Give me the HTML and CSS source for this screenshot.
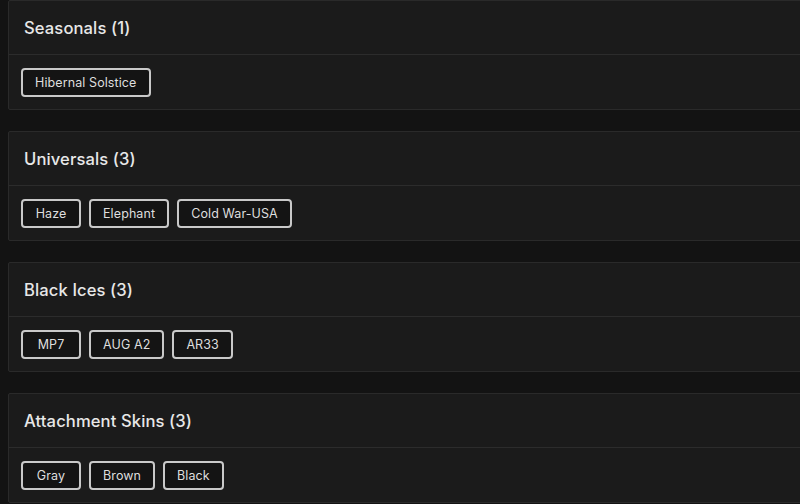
FILE: index.html
```html
<!DOCTYPE html>
<html>
<head>
<meta charset="utf-8">
<link rel="stylesheet" href="styles.css">
</head>
<body>
<main class="list">
  <section class="card">
    <header class="card-head"><h2 class="card-title">Seasonals (1)</h2></header>
    <div class="card-body">
      <span class="tag">Hibernal Solstice</span>
    </div>
  </section>
  <section class="card">
    <header class="card-head"><h2 class="card-title">Universals (3)</h2></header>
    <div class="card-body">
      <span class="tag">Haze</span>
      <span class="tag">Elephant</span>
      <span class="tag">Cold War-USA</span>
    </div>
  </section>
  <section class="card">
    <header class="card-head"><h2 class="card-title">Black Ices (3)</h2></header>
    <div class="card-body">
      <span class="tag">MP7</span>
      <span class="tag">AUG A2</span>
      <span class="tag">AR33</span>
    </div>
  </section>
  <section class="card">
    <header class="card-head"><h2 class="card-title">Attachment Skins (3)</h2></header>
    <div class="card-body">
      <span class="tag">Gray</span>
      <span class="tag">Brown</span>
      <span class="tag">Black</span>
    </div>
  </section>
</main>
</body>
</html>
```
FILE: styles.css
```css
html, body {
  margin: 0;
  padding: 0;
  overflow: hidden;
  background: #131313;
}
body {
  font-family: Inter, "Open Sans", sans-serif;
  color: #e6e6e6;
}
.list {
  display: flex;
  flex-direction: column;
  gap: 21px;
  margin-left: 8px;
  width: 830px;
}
.card {
  background: #1b1b1b;
  border: 1px solid #2a2a2a;
  border-radius: 2px;
}
.card-head {
  height: 53px;
  display: flex;
  align-items: center;
  padding: 0 15px;
  border-bottom: 1px solid #2c2c2c;
}
.card-title {
  margin: 0;
  font-size: 16.6px;
  font-weight: 500;
  color: #e8e8e8;
  letter-spacing: 0.1px;
}
.card-body {
  display: flex;
  gap: 8px;
  padding: 13px 12px 12px;
  height: 29px;
}
.tag {
  box-sizing: border-box;
  display: inline-flex;
  align-items: center;
  justify-content: center;
  min-width: 60px;
  height: 29px;
  padding: 0 12px;
  border: 2px solid #c9c9c9;
  border-radius: 4px;
  background: #141414;
  font-size: 12.5px;
  color: #dedede;
  letter-spacing: 0.1px;
}
```
